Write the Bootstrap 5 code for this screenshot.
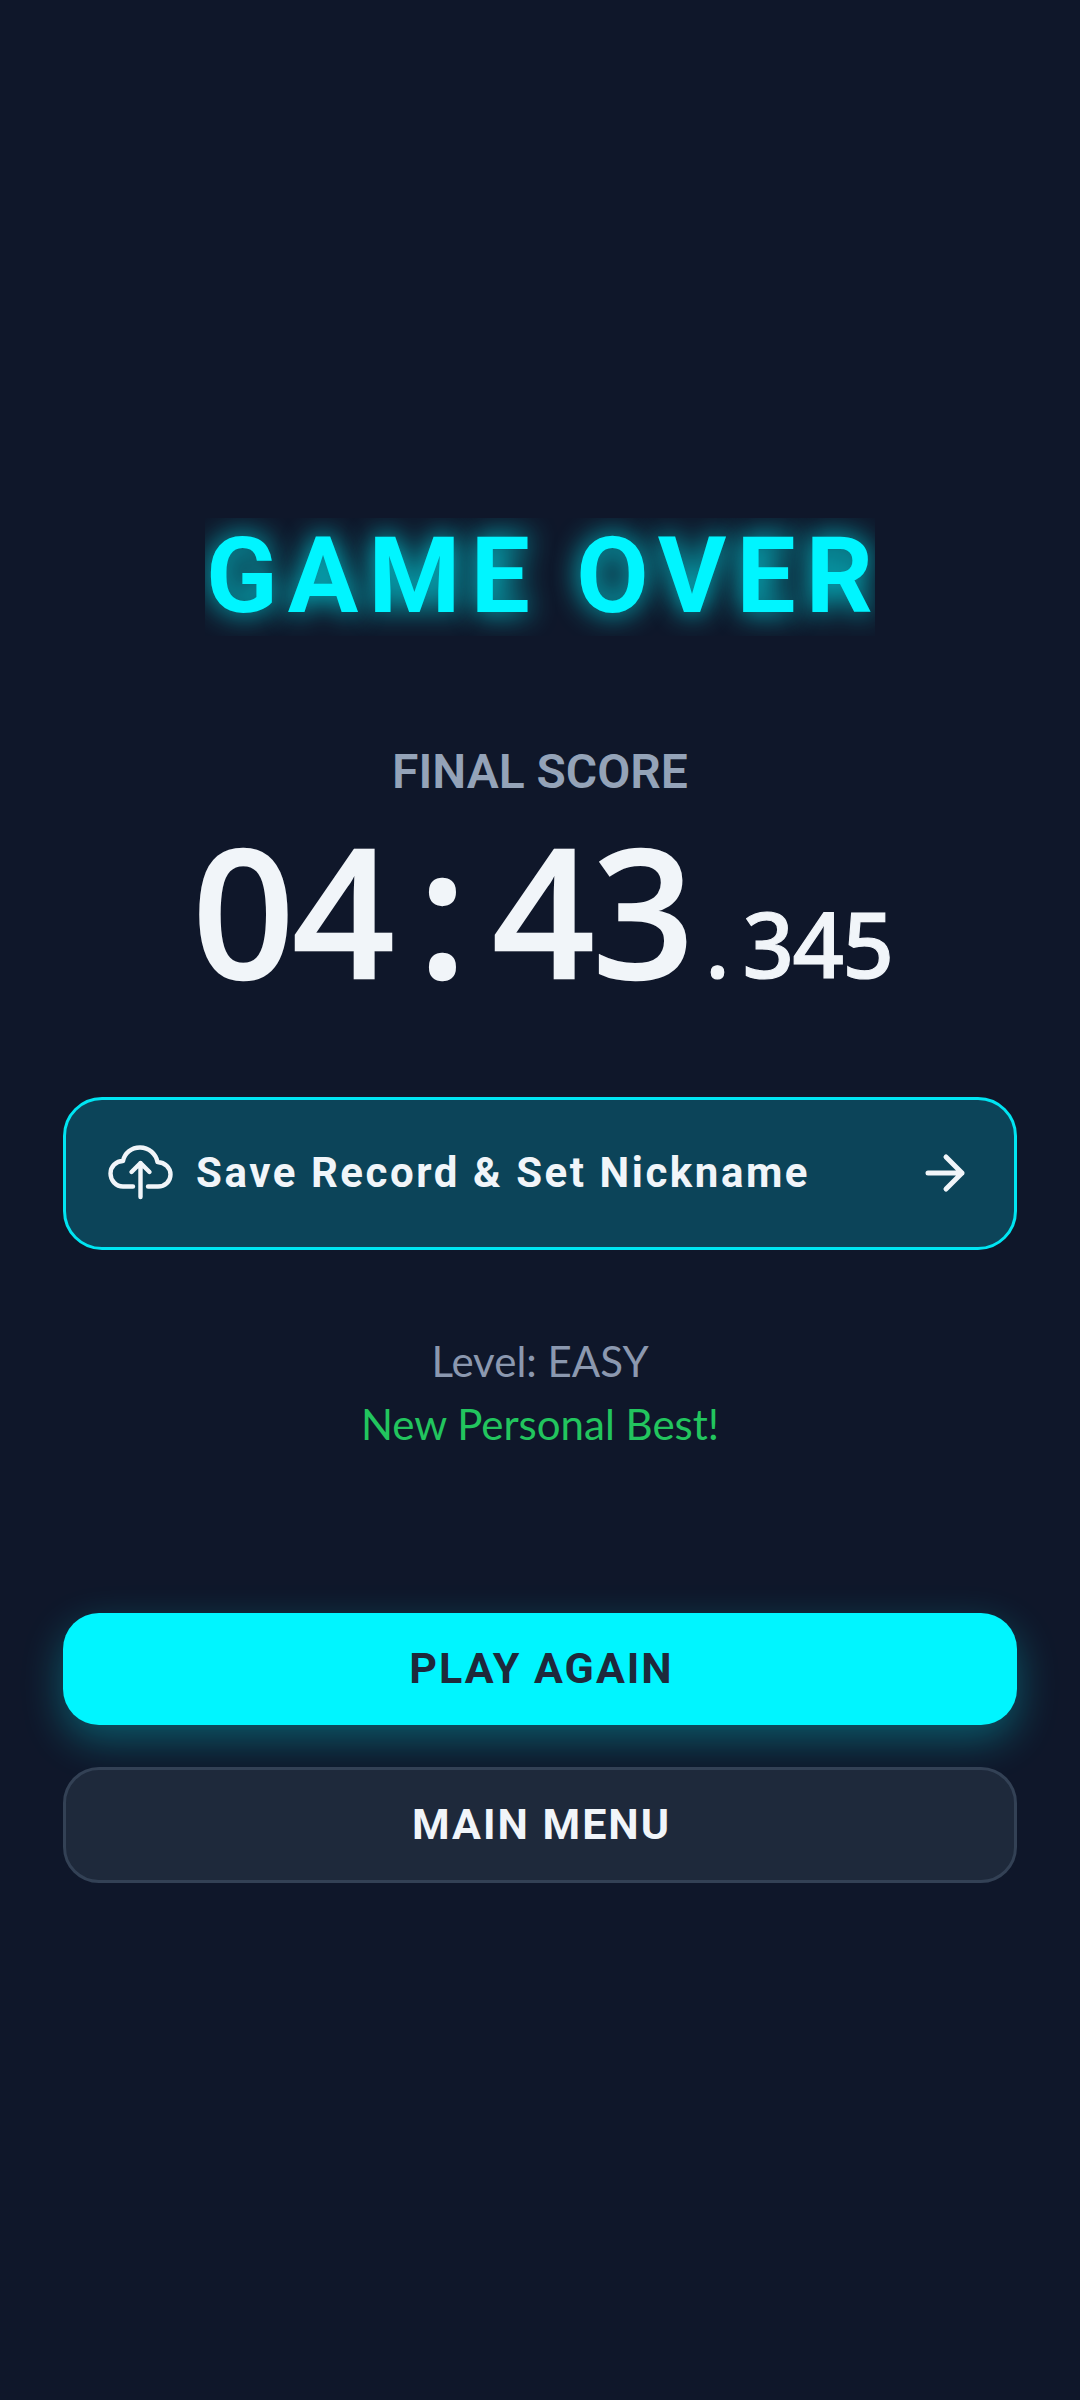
<!doctype html>
<html lang="en"><head><meta charset="utf-8"><title>Game Over</title>
<link href="https://cdn.jsdelivr.net/npm/bootstrap@5.3.0/dist/css/bootstrap.min.css" rel="stylesheet">
<style>
body{background:#0f172a;color:#f1f5f9;font-family:"Roboto",sans-serif}
.screen{height:2400px;padding:0 63px}
.over-title{font:700 105px/118px "Roboto",sans-serif;letter-spacing:10.2px;color:#00f5ff;text-shadow:0 0 28px rgba(0,245,255,.9);margin:0;padding:0 2px 0 1px;white-space:nowrap}
.over-last{letter-spacing:0}
.score-label{font:600 48px/56px "Roboto",sans-serif;color:#94a3b8;margin-top:108px}
.score-time{font:500 178px/200px "Noto Sans",sans-serif;font-stretch:87.5%;-webkit-text-stroke:2.5px #f1f5f9;color:#f1f5f9;margin-top:9px;padding-left:5px;white-space:nowrap}
.tcell{width:100px}
.score-ms{font-size:90px;width:50px;-webkit-text-stroke:1.2px #f1f5f9}
.save-row{height:153px;margin-top:54px;border:3px solid #00e5f2;border-radius:39px;background:#0c4459;color:#f1f5f9;padding:0 48px 0 41px;font:700 42px/1 "Roboto",sans-serif;letter-spacing:2.55px}
.save-row:hover,.save-row:active{background:#0c4459;color:#f1f5f9;border-color:#00e5f2}
.save-label{margin-left:21px}
.info-level{font:400 42px/63px "Lato",sans-serif;color:#8b98af;margin-top:80px}
.info-best{font:400 42px/63px "Lato",sans-serif;color:#22c55e}
.act{font:700 43px/1 "Roboto",sans-serif;letter-spacing:2px;border-radius:36px;width:100%;padding-left:3px;padding-right:0}
.act-play{height:112px;margin-top:157px;background:#00f5ff;color:#1e293b;border:0;box-shadow:0 15px 40px rgba(0,245,255,.3)}
.act-play:hover,.act-play:active{background:#00f5ff;color:#1e293b}
.act-menu{height:116px;margin-top:42px;background:#1e293b;color:#f1f5f9;border:3px solid #334155}
.act-menu:hover,.act-menu:active{background:#1e293b;color:#f1f5f9;border-color:#334155}
</style></head><body>
<main class="screen d-flex flex-column justify-content-center align-items-center text-center">
<h1 class="over-title d-inline-block overflow-hidden">GAME OVE<span class="over-last">R</span></h1>
<div class="score-label">FINAL SCORE</div>
<div class="score-time d-flex justify-content-center align-items-baseline"><span class="tcell">0</span><span class="tcell">4</span><span class="tcell">:</span><span class="tcell">4</span><span class="tcell">3</span><span class="score-ms">.</span><span class="score-ms">3</span><span class="score-ms">4</span><span class="score-ms">5</span></div>
<button type="button" class="btn save-row w-100 d-flex align-items-center justify-content-between">
<span class="d-flex align-items-center">
<svg width="68" height="58" viewBox="15 15 68 58" fill="none" stroke="#f1f5f9" stroke-width="4.4" stroke-linecap="round" stroke-linejoin="round" aria-hidden="true"><path d="M41 57.5H31C24 57.5 18.5 51.5 18.5 44.5C18.5 37.5 24 32 31 32C32.5 24 39.5 18.5 48 18.5C57 18.5 64 25 65.5 33C73 33.5 78.5 38.5 78.5 45.5C78.5 52.5 73 57.5 66 57.5H56"/><path d="M48.5 68V34M39.5 43L48.5 34L57.5 43"/></svg>
<span class="save-label">Save Record &amp; Set Nickname</span></span>
<svg width="42" height="40" viewBox="0 0 42 40" fill="none" stroke="#f1f5f9" stroke-width="5" stroke-linecap="round" stroke-linejoin="round" aria-hidden="true"><path d="M4 20H38M22 4L38 20L22 36"/></svg>
</button>
<div class="info-level">Level: EASY</div>
<div class="info-best">New Personal Best!</div>
<button type="button" class="btn act act-play">PLAY AGAIN</button>
<button type="button" class="btn act act-menu">MAIN MENU</button>
</main>
<script src="https://cdn.jsdelivr.net/npm/bootstrap@5.3.0/dist/js/bootstrap.bundle.min.js"></script>
</body></html>
